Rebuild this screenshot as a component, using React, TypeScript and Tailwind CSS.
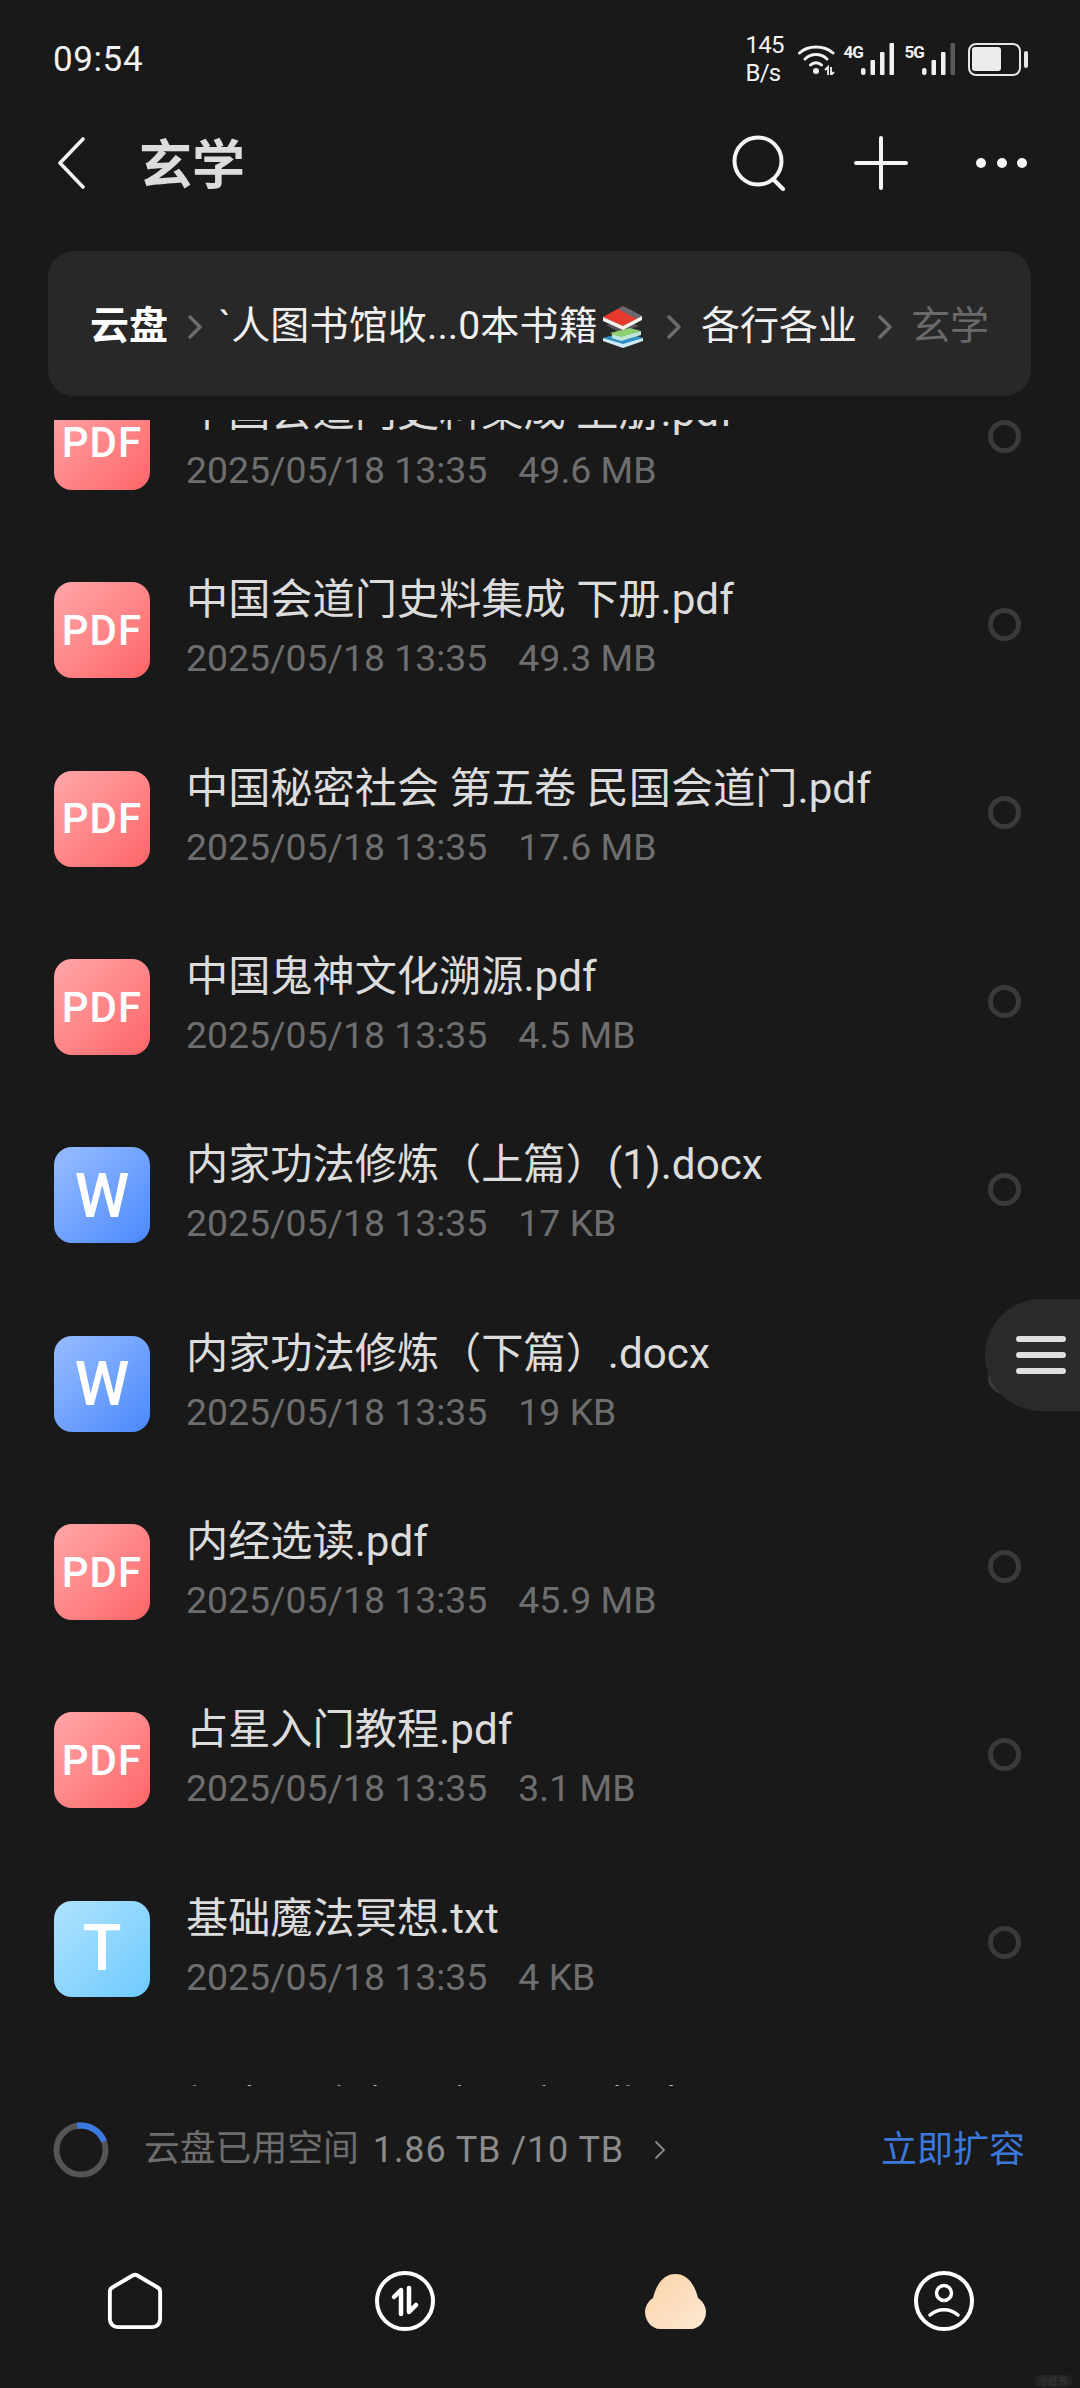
import React from "react";

type Kind = "pdf" | "doc" | "txt";
const rows: { name: string; size: string; kind: Kind }[] = [
  { name: "中国会道门史料集成 上册.pdf", size: "49.6 MB", kind: "pdf" },
  { name: "中国会道门史料集成 下册.pdf", size: "49.3 MB", kind: "pdf" },
  { name: "中国秘密社会 第五卷 民国会道门.pdf", size: "17.6 MB", kind: "pdf" },
  { name: "中国鬼神文化溯源.pdf", size: "4.5 MB", kind: "pdf" },
  { name: "内家功法修炼（上篇）(1).docx", size: "17 KB", kind: "doc" },
  { name: "内家功法修炼（下篇）.docx", size: "19 KB", kind: "doc" },
  { name: "内经选读.pdf", size: "45.9 MB", kind: "pdf" },
  { name: "占星入门教程.pdf", size: "3.1 MB", kind: "pdf" },
  { name: "基础魔法冥想.txt", size: "4 KB", kind: "txt" },
  { name: "探索与改变现实：实用指南.pdf", size: "2.2 MB", kind: "pdf" },
];

function FileIcon({ kind }: { kind: Kind }) {
  if (kind === "pdf")
    return (
      <div className="w-[96px] h-[96px] shrink-0 rounded-[18px] bg-linear-to-br from-[#ffa6a9] to-[#fc6468] flex items-center justify-center text-white text-[42px] tracking-[1px] font-medium">
        PDF
      </div>
    );
  if (kind === "doc")
    return (
      <div className="w-[96px] h-[96px] shrink-0 rounded-[18px] bg-linear-to-br from-[#98bdff] to-[#4a88fb] flex items-center justify-center text-white text-[62px] font-medium">
        W
      </div>
    );
  return (
    <div className="w-[96px] h-[96px] shrink-0 rounded-[18px] bg-linear-to-br from-[#aee2fd] to-[#6dcaff] flex items-center justify-center text-white text-[64px] font-medium">
      T
    </div>
  );
}

function Row({ name, size, kind }: { name: string; size: string; kind: Kind }) {
  return (
    <div className="h-[188.33px] pl-[54px] pr-[59px] flex items-center">
      <FileIcon kind={kind} />
      <div className="ml-[36px] flex-1 min-w-0 pb-[2px]">
        <div className="text-[42.2px] leading-[54px] -mt-[4px] text-[#dcdcdc] whitespace-nowrap">{name}</div>
        <div className="mt-[8px] text-[37.4px] leading-[46px] text-[#6e6e6e] flex">
          <span>2025/05/18 13:35</span>
          <span className="ml-[31px]">{size}</span>
        </div>
      </div>
      <div className="w-[33px] h-[33px] rounded-full border-[5px] border-[#3a3a3a] -mt-[12px] shrink-0" />
    </div>
  );
}

function Chevron({ className }: { className: string }) {
  return (
    <svg width="14" height="24" viewBox="0 0 14 24" fill="none" className={className}>
      <path d="M2 2l10 10L2 22" stroke="#6c6c6c" strokeWidth="3.5" strokeLinecap="round" strokeLinejoin="round" />
    </svg>
  );
}

function Bars({ dim }: { dim?: boolean }) {
  return (
    <svg width="33" height="32" viewBox="0 0 33 32" fill="#f2f2f2">
      <rect x="0" y="25" width="4.5" height="7" rx="2" />
      <rect x="9.5" y="17" width="4.5" height="15" rx="1" />
      <rect x="19" y="9" width="4.5" height="23" rx="1" />
      <rect x="28.5" y="0" width="4.5" height="32" rx="1" fill={dim ? "#5a5a5a" : "#f2f2f2"} />
    </svg>
  );
}

function Books() {
  return (
    <svg width="44" height="44" viewBox="0 0 44 44" className="ml-[1px] shrink-0">
      <path d="M3 33l21-6 19 6-20 9z" fill="#2f8fc4" />
      <path d="M3 33l20 6 20-6v3l-20 7-20-7z" fill="#cfeaf5" />
      <path d="M6 20l19-5 14 6-18 7z" fill="#55565a" />
      <path d="M10 28l20-5 11 3-20 7z" fill="#8ccf6f" />
      <path d="M12 29l9 3 20-6v4l-20 6-9-3z" fill="#bfe6d8" />
      <path d="M3 12L23 1l19 10-19 10z" fill="#e8392e" />
      <path d="M23 1l19 10-5 3L18 4z" fill="#666a70" />
      <path d="M3 12l20 9 19-10v4L23 25 3 16z" fill="#f4f1ea" />
    </svg>
  );
}

export default function App() {
  return (
    <div className="w-[1080px] h-[2388px] bg-[#191919] relative overflow-hidden flex flex-col font-[Roboto,'Noto_Sans_CJK_SC',sans-serif]">
      {/* Status bar */}
      <div className="h-[118px] shrink-0 pl-[53px] pr-[52px] flex items-center justify-between text-[#f2f2f2]">
        <span className="text-[35px] tracking-[0.6px] mt-[2px]">09:54</span>
        <div className="flex items-center">
          <div className="text-[24px] leading-[28px] tracking-[-0.8px] w-[38px]">
            <div>145</div>
            <div>B/s</div>
          </div>
          <svg width="37" height="32" viewBox="0 0 37 32" fill="none" className="ml-[14px]">
            <path d="M1.5 10C10 2 26 2 35 10" stroke="#f2f2f2" strokeWidth="3" strokeLinecap="round" />
            <path d="M7 16C13 10 23 10 29 16" stroke="#f2f2f2" strokeWidth="3" strokeLinecap="round" />
            <path d="M12.5 22c3-3 8-3 11 0" stroke="#f2f2f2" strokeWidth="3" strokeLinecap="round" />
            <circle cx="18" cy="28" r="3" fill="#f2f2f2" />
            <path d="M27 27l3-3v8M33 24v8l3-3" stroke="#f2f2f2" strokeWidth="1.8" />
          </svg>
          <div className="h-[32px] flex items-center">
            <span className="ml-[9px] w-[17px] self-start text-[17px] leading-[18px] font-bold tracking-[-1px]">4G</span>
            <Bars />
            <span className="ml-[11px] w-[17px] self-start text-[17px] leading-[18px] font-bold tracking-[-1px]">5G</span>
            <Bars dim />
          </div>
          <div className="ml-[13px] w-[53px] h-[33px] rounded-[8px] border-[2.5px] border-[#e6e6e6] p-[2.5px]">
            <div className="w-[29px] h-full rounded-[3px] bg-[#ececec]" />
          </div>
          <div className="ml-[3px] w-[4.5px] h-[17px] rounded-[2px] bg-[#e6e6e6]" />
        </div>
      </div>

      {/* Header */}
      <div className="h-[90px] shrink-0 flex items-center pl-[58px] pr-[53px]">
        <svg width="27" height="52" viewBox="0 0 27 52" fill="none">
          <path d="M25 2L2 26l23 24" stroke="#f2f2f2" strokeWidth="3.6" strokeLinecap="round" strokeLinejoin="round" />
        </svg>
        <span className="ml-[54px] mt-[6px] text-[53px] font-bold text-[#dcdcdc] leading-none">玄学</span>
        <div className="ml-auto flex items-center">
          <svg width="56" height="56" viewBox="0 0 56 56" fill="none">
            <circle cx="26" cy="26" r="23.5" stroke="#f5f5f5" strokeWidth="4" />
            <path d="M41 44l10 10" stroke="#f5f5f5" strokeWidth="4" strokeLinecap="round" />
          </svg>
          <svg width="54" height="54" viewBox="0 0 54 54" fill="none" className="ml-[66px]">
            <path d="M27 2v50M2 27h50" stroke="#f5f5f5" strokeWidth="4" strokeLinecap="round" />
          </svg>
          <div className="ml-[68px] flex gap-[10.5px]">
            <div className="w-[10px] h-[10px] rounded-full bg-[#f5f5f5]" />
            <div className="w-[10px] h-[10px] rounded-full bg-[#f5f5f5]" />
            <div className="w-[10px] h-[10px] rounded-full bg-[#f5f5f5]" />
          </div>
        </div>
      </div>

      {/* Breadcrumb */}
      <div className="mt-[43px] mx-[48px] w-[983px] h-[145px] shrink-0 rounded-[26px] bg-[#282828] pl-[42px] pt-[6px] flex items-center text-[39px] text-[#f0f0f0] whitespace-nowrap">
        <span className="font-bold text-white">云盘</span>
        <Chevron className="ml-[20px] shrink-0" />
        <span className="ml-[17px] w-[380px] overflow-hidden tracking-[0.15px]">`人图书馆收...0本书籍</span>
        <Books />
        <Chevron className="ml-[23px] shrink-0" />
        <span className="ml-[20px]">各行各业</span>
        <Chevron className="ml-[21px] shrink-0" />
        <span className="ml-[19px] text-[#6a6a6a]">玄学</span>
      </div>

      {/* List */}
      <div className="mt-[24px] h-[1666px] shrink-0 overflow-hidden">
        <div className="-mt-[72px]">
          {rows.map((r) => (
            <Row key={r.name} {...r} />
          ))}
        </div>
      </div>

      {/* Storage */}
      <div className="h-[128px] shrink-0 pl-[53px] pr-[55px] flex items-center">
        <svg width="56" height="56" viewBox="0 0 56 56" fill="none">
          <circle cx="28" cy="28" r="24.5" stroke="#555555" strokeWidth="6" />
          <path d="M24 3.8A24.5 24.5 0 0 1 51 19.5" stroke="#3b78e0" strokeWidth="6" />
        </svg>
        <span className="ml-[35px] text-[35.8px] text-[#6e6e6e] whitespace-nowrap">云盘已用空间</span>
        <span className="ml-[14px] text-[36px] text-[#8a8a8a] tracking-[0.9px] whitespace-nowrap">1.86 TB /10 TB</span>
        <svg width="12" height="20" viewBox="0 0 12 20" fill="none" className="ml-[30px] shrink-0">
          <path d="M2 2l8 8-8 8" stroke="#8a8a8a" strokeWidth="1.8" strokeLinecap="round" />
        </svg>
        <span className="ml-auto text-[36px] text-[#3b78dc] whitespace-nowrap">立即扩容</span>
      </div>

      {/* Bottom nav */}
      <div className="flex-1 grid grid-cols-4 items-center justify-items-center">
        <svg width="56" height="58" viewBox="0 0 56 60" fill="none">
          <path
            d="M25.5 3.6a5 5 0 0 1 5 0l21 12.4a5 5 0 0 1 2.5 4.3V49a8 8 0 0 1-8 8H10a8 8 0 0 1-8-8V20.300a5 5 0 0 1 2.500-4.300z"
            stroke="#ffffff"
            strokeWidth="4"
            strokeLinejoin="round"
          />
        </svg>
        <svg width="62" height="62" viewBox="0 0 62 62" fill="none">
          <circle cx="31" cy="31" r="28" stroke="#ffffff" strokeWidth="4" />
          <path d="M27 44V20l-7 7" stroke="#ffffff" strokeWidth="4.500" strokeLinecap="round" strokeLinejoin="round" />
          <path d="M35 18v24l7-7" stroke="#ffffff" strokeWidth="4.500" strokeLinecap="round" strokeLinejoin="round" />
        </svg>
        <svg width="61" height="55" viewBox="0 0 61 55">
          <defs>
            <linearGradient id="cl" x1="0" y1="0" x2="1" y2="1">
              <stop offset="0" stopColor="#fad3a9" />
              <stop offset="1" stopColor="#fde8d2" />
            </linearGradient>
          </defs>
          <path
            d="M30.500 0C41 0 49 8 53 24C58 27 61 33 61 38C61 47 54 55 46 55L15 55C7 55 0 47 0 38C0 33 3 27 8 24C12 8 20 0 30.500 0Z"
            fill="url(#cl)"
          />
        </svg>
        <svg width="62" height="62" viewBox="0 0 62 62" fill="none" className="-ml-[2px]">
          <circle cx="31" cy="31" r="28" stroke="#ffffff" strokeWidth="4" />
          <circle cx="31" cy="23" r="7.500" stroke="#ffffff" strokeWidth="3.500" />
          <path d="M17 45c8-7 20-7 28 0" stroke="#ffffff" strokeWidth="3.500" strokeLinecap="round" />
        </svg>
      </div>

      {/* Floating handle */}
      <div className="absolute right-0 top-[1299px] w-[95px] h-[112px] rounded-l-[56px] bg-[#2a2a2a] flex flex-col gap-[10px] pl-[31px] pt-[37px]">
        <div className="w-[50px] h-[6px] rounded-full bg-[#e0e0e0]" />
        <div className="w-[50px] h-[6px] rounded-full bg-[#e0e0e0]" />
        <div className="w-[50px] h-[6px] rounded-full bg-[#e0e0e0]" />
      </div>

      {/* Watermark */}
      <div className="absolute left-[1035px] top-[2375px] w-[37px] h-[12px] rounded-[6px] bg-[#242424] text-[9px] leading-[12px] text-center text-[#3a3a3a]">
        小红书
      </div>
    </div>
  );
}
